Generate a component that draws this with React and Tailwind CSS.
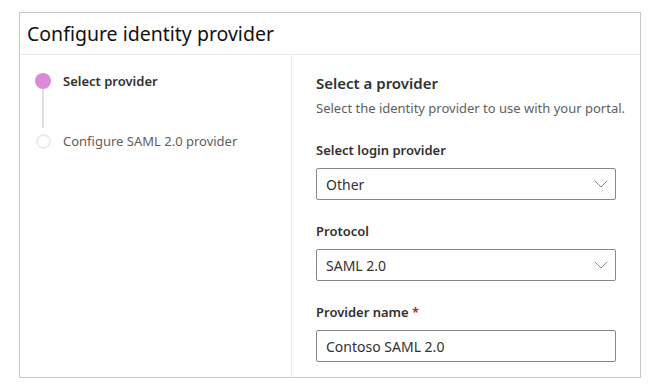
import { ChevronDown } from 'lucide-react';

const font = { fontFamily: '"Segoe UI", "Noto Sans", sans-serif' };

const Dropdown = ({ value }) => (
  <div className="flex items-center justify-between w-[300px] h-[32px] border border-[#8a8886] rounded-[2px] pl-[9px] pr-[2px] text-[14px] text-[#323130]">
    <span>{value}</span>
    <ChevronDown className="w-[24px] h-[24px] text-[#7f8fa0]" strokeWidth={1} />
  </div>
);

const App = () => {
  return (
    <div className="w-[654px] h-[392px] bg-white pt-[12px] pl-[19px]" style={font}>
      <div className="w-[622px] h-[366px] border border-[#c8c8c8] flex flex-col">
        {/* Header */}
        <div className="h-[42px] border-b border-[#edebe9] flex items-center pl-[7px]">
          <h1 className="text-[19.5px] font-normal text-[#111] leading-none">Configure identity provider</h1>
        </div>

        <div className="flex flex-1 min-h-0">
          {/* Steps */}
          <div className="w-[272px] border-r border-[#edebe9] pt-[18px] pl-[15px]">
            <div className="flex gap-[12px]">
              <div className="flex flex-col items-center w-[16px]">
                <div className="w-[16px] h-[16px] rounded-full bg-[#d98ad9]" />
                <div className="w-[2px] h-[39px] bg-[#e1dfdd]" />
                <div className="w-[15px] h-[15px] rounded-full border-2 border-[#edebe9] mt-[6px]" />
              </div>
              <div className="flex flex-col text-[13px]">
                <span className="font-semibold text-[#323130] leading-[16px]">Select provider</span>
                <span className="text-[#605e5c] leading-[16px] mt-[44px]">Configure SAML 2.0 provider</span>
              </div>
            </div>
          </div>

          {/* Form */}
          <div className="flex-1 pl-[24px] pt-[18px]">
            <h2 className="text-[15px] font-semibold text-[#323130] leading-[20px]">Select a provider</h2>
            <p className="text-[13px] text-[#605e5c] leading-[18px] mt-[6px]">Select the identity provider to use with your portal.</p>

            <label className="block text-[13px] font-semibold text-[#323130] leading-[18px] mt-[24px]">Select login provider</label>
            <div className="mt-[9px]"><Dropdown value="Other" /></div>

            <label className="block text-[13px] font-semibold text-[#323130] leading-[18px] mt-[22px]">Protocol</label>
            <div className="mt-[9px]"><Dropdown value="SAML 2.0" /></div>

            <label className="block text-[13px] font-semibold text-[#323130] leading-[18px] mt-[22px]">
              Provider name <span className="text-[#a4262c]">*</span>
            </label>
            <div className="mt-[9px] flex items-center w-[300px] h-[32px] border border-[#8a8886] rounded-[2px] pl-[9px] text-[14px] text-[#323130]">
              Contoso SAML 2.0
            </div>
          </div>
        </div>
      </div>
    </div>
  );
};

export default App;
